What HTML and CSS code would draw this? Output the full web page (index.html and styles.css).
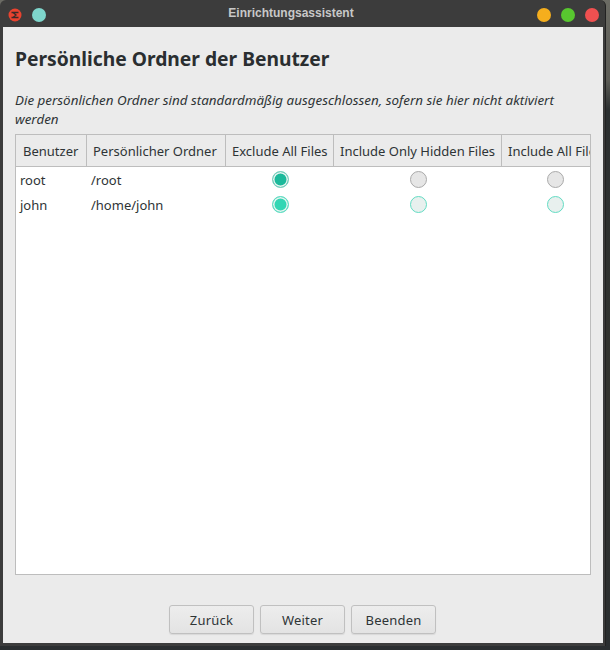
FILE: index.html
```html
<!DOCTYPE html>
<html lang="de">
<head>
    <meta charset="UTF-8">
    <meta name="viewport" content="width=device-width, initial-scale=1.0">
    <title>Einrichtungsassistent</title>
    <link rel="stylesheet" href="styles.css">
</head>
<body>
    <div class="window">
        <div class="titlebar">
            <div class="title-left">
                <svg class="app-icon" width="14" height="14" viewBox="0 0 14 14">
                    <circle cx="7" cy="7" r="6.5" fill="#e8432f"/>
                    <path d="M3.5 4.5h7M5 4.5l3 2.5-3 2.5M3.5 9.5h7" fill="none" stroke="#3a2a28" stroke-width="1.3"/>
                </svg>
                <span class="dot dot-teal"></span>
            </div>
            <span class="title-text">Einrichtungsassistent</span>
            <div class="title-right">
                <span class="dot dot-orange"></span>
                <span class="dot dot-green"></span>
                <span class="dot dot-red"></span>
            </div>
        </div>

        <div class="content">
            <h1>Persönliche Ordner der Benutzer</h1>
            <p class="hint">Die persönlichen Ordner sind standardmäßig ausgeschlossen, sofern sie hier nicht aktiviert werden</p>

            <div class="table-box">
                <div class="row head">
                    <div class="col-user">Benutzer</div>
                    <div class="col-home">Persönlicher Ordner</div>
                    <div class="col-a">Exclude All Files</div>
                    <div class="col-b">Include Only Hidden Files</div>
                    <div class="col-c">Include All Files</div>
                </div>
                <div class="row">
                    <div class="col-user">root</div>
                    <div class="col-home">/root</div>
                    <div class="col-a"><span class="radio checked"></span></div>
                    <div class="col-b"><span class="radio"></span></div>
                    <div class="col-c"><span class="radio"></span></div>
                </div>
                <div class="row">
                    <div class="col-user">john</div>
                    <div class="col-home">/home/john</div>
                    <div class="col-a"><span class="radio checked hover"></span></div>
                    <div class="col-b"><span class="radio hover"></span></div>
                    <div class="col-c"><span class="radio hover"></span></div>
                </div>
            </div>

            <div class="buttons">
                <button class="btn">Zurück</button>
                <button class="btn">Weiter</button>
                <button class="btn">Beenden</button>
            </div>
        </div>
    </div>
</body>
</html>
```

FILE: styles.css
```css
body {
    margin: 0;
    width: 610px;
    height: 650px;
    overflow: hidden;
    background: linear-gradient(#6b6b64 0, #5c5c56 80px, #2b2f30 110px, #33342f 400px, #2a2e30 100%);
    font-family: "Noto Sans", "Open Sans", sans-serif;
}
.window {
    width: 606px;
    height: 646px;
    box-sizing: border-box;
    display: flex;
    flex-direction: column;
    background-color: #3c3c3c;
    border-radius: 6px 6px 0 0;
    border-right: 1px solid #222;
    padding: 0 2px 3px 3px;
}
.titlebar {
    height: 27px;
    flex: none;
    display: flex;
    align-items: center;
    justify-content: space-between;
    position: relative;
    padding: 3px 4px 0 5px;
    box-sizing: border-box;
}
.title-left, .title-right {
    display: flex;
    align-items: center;
    gap: 10px;
}
.title-text {
    position: absolute;
    left: 0;
    right: 24px;
    top: 6px;
    text-align: center;
    font-family: "Liberation Sans", Arial, sans-serif;
    font-size: 12px;
    font-weight: bold;
    color: #c8c8c8;
}
.app-icon {
    display: block;
}
.dot {
    width: 14px;
    height: 14px;
    border-radius: 50%;
    display: block;
}
.dot-teal { background-color: #7ed6cc; }
.dot-orange { background-color: #f5ae1d; }
.dot-green { background-color: #58c72f; }
.dot-red { background-color: #f05050; }
.content {
    flex: 1;
    display: flex;
    flex-direction: column;
    min-height: 0;
    background-color: #ebebeb;
    padding: 0 12px;
    color: #2e3436;
}
h1 {
    margin: 19px 0 0 0;
    font-size: 19.25px;
    line-height: 25px;
    font-weight: bold;
    color: #2a2e30;
}
.hint {
    margin: 20px 0 0 0;
    font-size: 13.4px;
    line-height: 19px;
    font-style: italic;
}
.table-box {
    flex: none;
    height: 441px;
    margin-top: 5px;
    box-sizing: border-box;
    background-color: white;
    border: 1px solid #bdbdbd;
    overflow: hidden;
    font-size: 13px;
}
.row {
    display: grid;
    grid-template-columns: 71px 139px 108px 168px 106px;
    height: 25px;
    line-height: 25px;
    white-space: nowrap;
}
.row > div {
    padding-left: 4px;
    display: flex;
    align-items: center;
    overflow: hidden;
}
.row .col-a, .row .col-b, .row .col-c {
    justify-content: center;
    padding-left: 0;
}
.head {
    height: 32px;
    background-color: #ebebeb;
    border-bottom: 1px solid #bdbdbd;
    box-sizing: border-box;
    margin-bottom: 1px;
}
.head > div {
    border-right: 1px solid #bdbdbd;
    padding: 2px 6px 0 6px;
    justify-content: flex-start;
}
.head .col-a, .head .col-b, .head .col-c {
    padding: 2px 6px 0 6px;
    justify-content: flex-start;
}
.head .col-user {
    padding-left: 7px;
}
.head .col-c {
    border-right: none;
}
.radio {
    width: 17px;
    height: 17px;
    box-sizing: border-box;
    border-radius: 50%;
    display: block;
    background-color: #e6e6e6;
    border: 1.5px solid #aaaaaa;
    margin-bottom: 2px;
}
.radio.hover {
    border-color: #62dcc3;
    background-color: #e8f0ee;
}
.radio.checked {
    background-color: #1cb99b;
    border: 1.5px solid #7fcfbf;
    box-shadow: inset 0 0 0 1.5px #e6f4f0;
}
.radio.checked.hover {
    background-color: #33d6b4;
    border-color: #62dcc3;
}
.buttons {
    display: flex;
    justify-content: center;
    gap: 6px;
    margin-top: 30px;
    margin-right: 1px;
}
.btn {
    width: 85px;
    height: 29px;
    box-sizing: border-box;
    font-family: "Noto Sans", "Open Sans", sans-serif;
    font-size: 13px;
    letter-spacing: 0.2px;
    color: #2e3436;
    background: linear-gradient(#ededed, #e3e3e3);
    border: 1px solid #c0c0c0;
    border-radius: 3px;
    box-shadow: 0 1px 1px rgba(0,0,0,0.08);
    padding: 0;
    cursor: pointer;
}
```
